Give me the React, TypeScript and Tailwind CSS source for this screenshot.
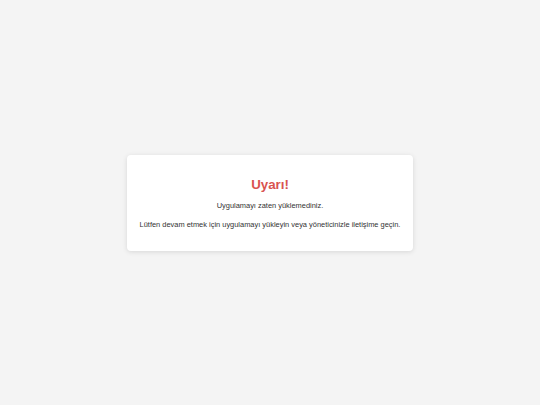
export default function App() {
  return (
    <div
      className="flex h-[405px] w-full items-center justify-center bg-[#f4f4f4]"
      style={{ fontFamily: '"Liberation Sans", Arial, sans-serif' }}
    >
      <div className="rounded-[4px] bg-white px-[13px] pt-[20px] pb-[21px] text-center shadow-[0_1px_5px_rgba(0,0,0,0.12)]">
        <h1 className="text-[13.3px] leading-[20px] font-bold text-[#d9534f]">Uyarı!</h1>
        <p className="mt-[6px] text-[7.45px] leading-[10px] text-[#333]">Uygulamayı zaten yüklemediniz.</p>
        <p className="mt-[9px] text-[7.45px] leading-[10px] text-[#333]">
          Lütfen devam etmek için uygulamayı yükleyin veya yöneticinizle iletişime geçin.
        </p>
      </div>
    </div>
  );
}
